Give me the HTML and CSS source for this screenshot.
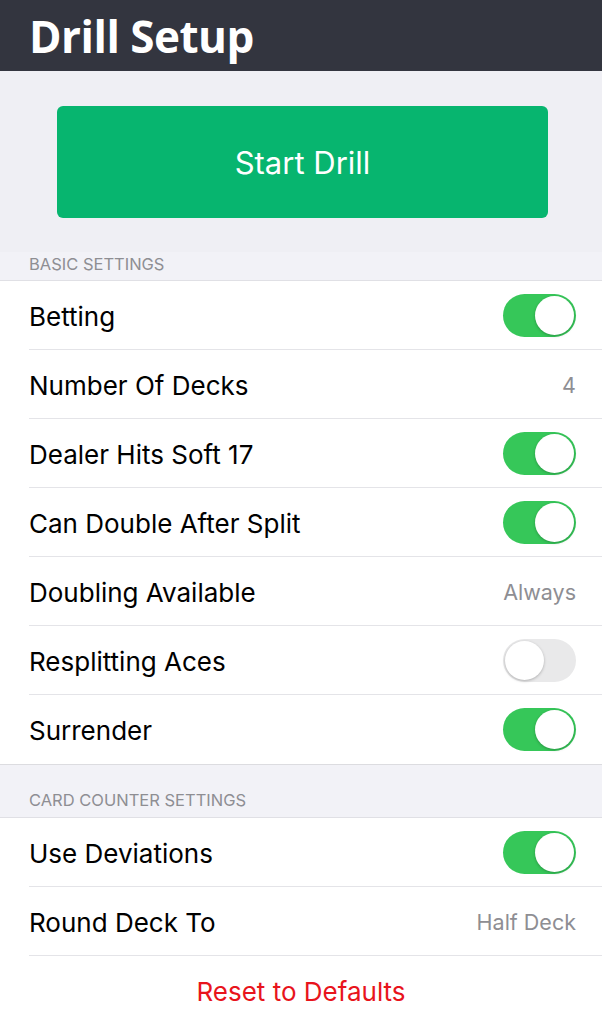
FILE: index.html
```html
<!DOCTYPE html>
<html>
<head>
  <title>Drill Setup</title>
  <link rel="stylesheet" href="styles.css">
</head>
<body>
  <header class="nav-bar">
    <h1 class="nav-title">Drill Setup</h1>
  </header>

  <div class="start-area">
    <button class="start-btn">Start Drill</button>
  </div>

  <div class="section-head first">BASIC SETTINGS</div>
  <ul class="table">
    <li class="cell"><span class="label">Betting</span><span class="switch on"></span></li>
    <li class="cell"><span class="label">Number Of Decks</span><span class="detail">4</span></li>
    <li class="cell"><span class="label">Dealer Hits Soft 17</span><span class="switch on"></span></li>
    <li class="cell"><span class="label">Can Double After Split</span><span class="switch on"></span></li>
    <li class="cell"><span class="label">Doubling Available</span><span class="detail">Always</span></li>
    <li class="cell"><span class="label">Resplitting Aces</span><span class="switch"></span></li>
    <li class="cell"><span class="label">Surrender</span><span class="switch on"></span></li>
  </ul>

  <div class="section-head">CARD COUNTER SETTINGS</div>
  <ul class="table">
    <li class="cell"><span class="label">Use Deviations</span><span class="switch on"></span></li>
    <li class="cell"><span class="label">Round Deck To</span><span class="detail">Half Deck</span></li>
    <li class="cell reset"><span class="label">Reset to Defaults</span></li>
  </ul>
</body>
</html>
```

FILE: styles.css
```css
body {
  margin: 0;
  background-color: #f0f0f5;
  font-family: Inter, "Liberation Sans", Arial, sans-serif;
  overflow: hidden;
}

/* Top bar */
.nav-bar {
  background-color: #33353f;
  height: 71px;
  display: flex;
  align-items: center;
  padding-left: 29px;
}

.nav-title {
  margin: 0;
  color: #fff;
  font-family: "Open Sans", sans-serif;
  font-weight: 700;
  font-size: 44px;
  letter-spacing: -0.5px;
  line-height: 1;
}

/* Start button */
.start-area {
  background-color: #efeff4;
  padding: 35px 54px 34px 57px;
}

.start-btn {
  display: block;
  width: 100%;
  height: 112px;
  border: none;
  border-radius: 6px;
  background-color: #07b56f;
  color: #fff;
  font-family: Inter, sans-serif;
  font-size: 31px;
}

/* Section headers */
.section-head {
  height: 53px;
  box-sizing: border-box;
  padding: 25px 29px 0;
  color: #8e8e93;
  font-size: 16.5px;
  background-color: #f2f2f7;
  border-bottom: 1px solid #e0e0e5;
}

.section-head.first {
  height: 29px;
  padding-top: 2px;
}

/* Table cells */
.table {
  list-style: none;
  margin: 0;
  padding: 0 0 0 29px;
  background-color: #fff;
  border-bottom: 1px solid #dcdce0;
}

.cell {
  height: 69px;
  box-sizing: border-box;
  display: flex;
  align-items: center;
  justify-content: space-between;
  padding-right: 26px;
  padding-top: 2px;
  border-bottom: 1px solid #e4e4e8;
}

.cell:last-child {
  border-bottom: none;
}

.label {
  font-size: 26px;
  color: #000;
}

.detail {
  font-size: 21.5px;
  color: #8e8e93;
}

.reset {
  justify-content: center;
  padding-right: 29px;
}

.reset .label {
  color: #e8141c;
}

/* iOS style switch */
.switch {
  position: relative;
  width: 73px;
  height: 43px;
  margin-top: -2px;
  border-radius: 22px;
  background-color: #e9e9ea;
  box-sizing: border-box;
}

.switch::after {
  content: "";
  position: absolute;
  top: 2px;
  left: 2px;
  width: 39px;
  height: 39px;
  border-radius: 50%;
  background: #fff;
  box-shadow: 0 1px 3px rgba(0, 0, 0, 0.25);
}

.switch.on {
  background-color: #36c759;
}

.switch.on::after {
  left: 32px;
}
```
